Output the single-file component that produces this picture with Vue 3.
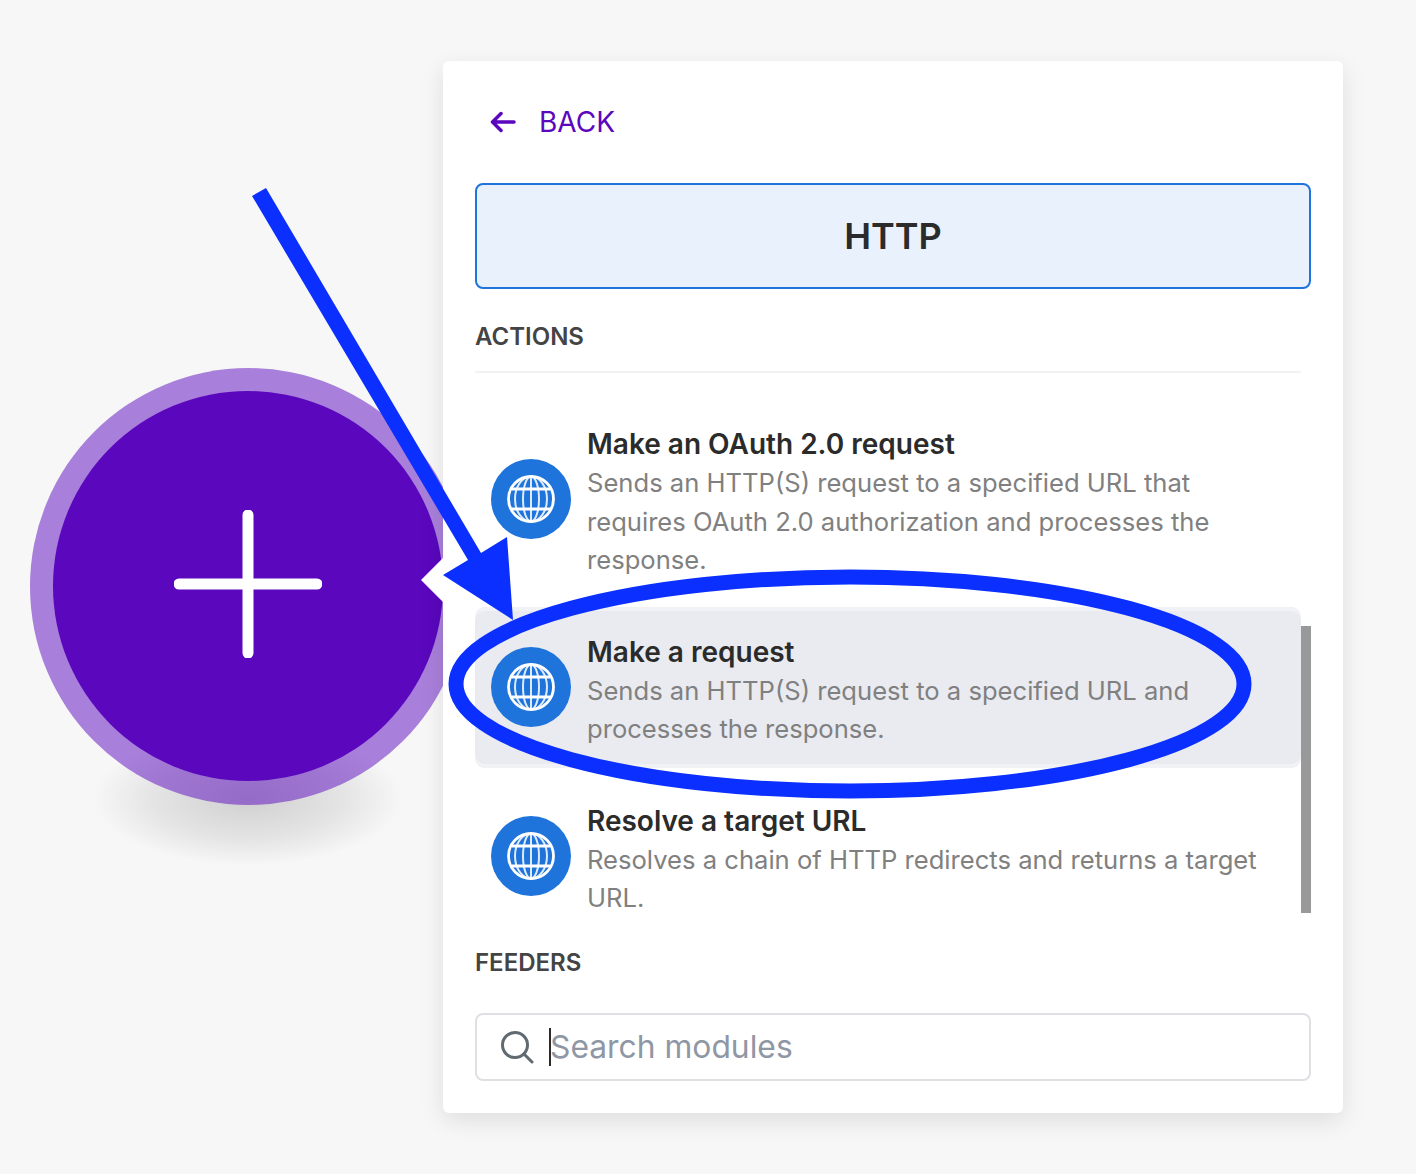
<template>
  <div class="page">
    <!-- trigger bubble sits behind the panel -->
    <div class="bubbleShadow"></div>
    <div class="bubble">
      <div class="bubbleInner">
        <svg class="plus" viewBox="0 0 148 148" width="148" height="148">
          <path d="M74 5V143M5 74H143" stroke="#fff" stroke-width="11" stroke-linecap="round" fill="none" />
        </svg>
      </div>
    </div>

    <div class="panel">
      <span class="notch"></span>
      <div class="backRow">
        <svg viewBox="0 0 26 22" width="26" height="22">
          <path d="M24 11H3M11 2.500L2.500 11L11 19.500" stroke="#5a07bd" stroke-width="3.500" stroke-linecap="round" stroke-linejoin="round" fill="none" />
        </svg>
        <span>BACK</span>
      </div>

      <div class="appBox">HTTP</div>

      <div class="sectionTitle">ACTIONS</div>
      <div class="divider"></div>

      <div class="moduleList">
        <div
          v-for="item in modules"
          :key="item.title"
          :class="['moduleItem', item.active ? 'active' : '']"
        >
          <div class="moduleIcon">
            <svg viewBox="0 0 48 48" width="48" height="48" fill="none" stroke="#fff" stroke-width="2.800">
              <circle cx="24" cy="24" r="22.500" />
              <path d="M5 14H43M5 34H43" />
              <g stroke-width="2" stroke-opacity="0.850">
                <ellipse cx="24" cy="24" rx="8" ry="22.500" />
                <ellipse cx="24" cy="24" rx="16" ry="22.500" />
                <path d="M24 1.500V46.500" />
              </g>
            </svg>
          </div>
          <div class="moduleText">
            <div class="moduleTitle">{{ item.title }}</div>
            <div class="moduleDesc">{{ item.desc }}</div>
          </div>
        </div>
        <div class="scrollThumb"></div>
      </div>

      <div class="sectionTitle feeders">FEEDERS</div>

      <div class="searchBox">
        <svg viewBox="0 0 33 33" width="33" height="33" fill="none" stroke="#5f6b70" stroke-width="3">
          <circle cx="14" cy="14" r="12.500" />
          <path d="M23.500 23.500L31 31" stroke-linecap="round" />
        </svg>
        <span class="caret"></span>
        <span class="placeholder">Search modules</span>
      </div>
    </div>

    <!-- annotation drawn on top of the screenshot -->
    <svg class="annotation" viewBox="0 0 1416 1174" width="1416" height="1174">
      <polygon points="252,196 266,188 481,553 507,537 513,620 443,575 468,560" fill="#0a2fff" />
      <ellipse cx="850" cy="684" rx="394" ry="107" fill="none" stroke="#0a2fff" stroke-width="15" />
    </svg>
  </div>
</template>

<script setup>
const modules = [
  {
    title: 'Make an OAuth 2.0 request',
    desc: 'Sends an HTTP(S) request to a specified URL that requires OAuth 2.0 authorization and processes the response.',
  },
  {
    title: 'Make a request',
    desc: 'Sends an HTTP(S) request to a specified URL and processes the response.',
    active: true,
  },
  {
    title: 'Resolve a target URL',
    desc: 'Resolves a chain of HTTP redirects and returns a target URL.',
  },
]
</script>

<style>
html, body {
  margin: 0;
  background: #f7f7f7;
}
</style>

<style scoped>
.page {
  position: relative;
  width: 1416px;
  height: 1174px;
  overflow: hidden;
  background: #f7f7f7;
  font-family: Inter, "Liberation Sans", sans-serif;
  padding: 61px 73px 0 443px;
  box-sizing: border-box;
}

.bubbleShadow {
  position: absolute;
  left: 93px;
  top: 730px;
  width: 310px;
  height: 136px;
  background: radial-gradient(closest-side, rgba(0, 0, 0, 0.16), rgba(0, 0, 0, 0.08) 60%, rgba(0, 0, 0, 0));
}

.bubble {
  position: absolute;
  left: 30px;
  top: 368px;
  width: 437px;
  height: 437px;
  padding: 23px;
  box-sizing: border-box;
  border-radius: 50%;
  background: rgba(90, 7, 189, 0.5);
}

.bubbleInner {
  width: 390px;
  height: 390px;
  border-radius: 50%;
  background: #5a07bd;
  display: flex;
  align-items: center;
  justify-content: center;
}

.plus {
  margin-bottom: 5px;
}

.panel {
  position: relative;
  width: 900px;
  height: 1052px;
  background: #fff;
  border-radius: 6px;
  box-shadow: 0 8px 24px rgba(0, 0, 0, 0.1);
  padding: 32px;
  box-sizing: border-box;
}

.notch {
  position: absolute;
  left: -22px;
  top: 497px;
  width: 0;
  height: 0;
  border-top: 22px solid transparent;
  border-bottom: 22px solid transparent;
  border-right: 22px solid #fff;
}

.backRow {
  display: flex;
  align-items: center;
  gap: 23px;
  height: 58px;
  padding-left: 15px;
  color: #5a07bd;
  font-size: 28px;
}

.appBox {
  margin-top: 32px;
  height: 106px;
  box-sizing: border-box;
  border: 2px solid #1f74dc;
  border-radius: 8px;
  background: #e9f1fc;
  display: flex;
  align-items: center;
  justify-content: center;
  font-size: 36px;
  font-weight: 600;
  color: #2b2b2b;
}

.sectionTitle {
  margin-top: 32px;
  font-size: 24px;
  line-height: 32px;
  font-weight: 600;
  color: #444;
}

.divider {
  margin-top: 18px;
  width: 826px;
  height: 2px;
  background: #f2f2f2;
}

.moduleList {
  position: relative;
  display: flex;
  flex-direction: column;
  gap: 8px;
  height: 548px;
  margin-top: 26px;
  overflow: hidden;
  padding-right: 10px;
}

.moduleItem {
  flex: none;
  display: flex;
  align-items: center;
  gap: 16px;
  padding: 19px 16px;
  border-radius: 10px;
  box-sizing: border-box;
}

.moduleItem.active {
  background: #e9ebf1;
  box-shadow: inset 0 4px 0 #f1f2f6, inset 0 -4px 0 #f1f2f6;
}

.moduleIcon {
  flex: none;
  width: 80px;
  height: 80px;
  border-radius: 50%;
  background: #1f74dc;
  display: flex;
  align-items: center;
  justify-content: center;
}

.moduleTitle {
  margin-top: 6px;
  font-size: 28px;
  line-height: 40px;
  font-weight: 600;
  color: #2b2b2b;
}

.moduleDesc {
  font-size: 25.600px;
  line-height: 38.500px;
  color: #808080;
}

.scrollThumb {
  position: absolute;
  right: 0;
  top: 227px;
  width: 10px;
  height: 287px;
  background: #999;
}

.feeders {
  margin-top: 0;
}

.searchBox {
  display: flex;
  align-items: center;
  margin-top: 34px;
  height: 68px;
  box-sizing: border-box;
  border: 2px solid #dfe0e4;
  border-radius: 8px;
  padding-left: 24px;
}

.caret {
  width: 2px;
  height: 38px;
  background: #2b2b2b;
  margin-left: 15px;
}

.placeholder {
  margin-left: -1px;
  margin-bottom: 2px;
  font-size: 31.800px;
  color: #8f97a5;
}

.annotation {
  position: absolute;
  left: 0;
  top: 0;
  pointer-events: none;
}
</style>
